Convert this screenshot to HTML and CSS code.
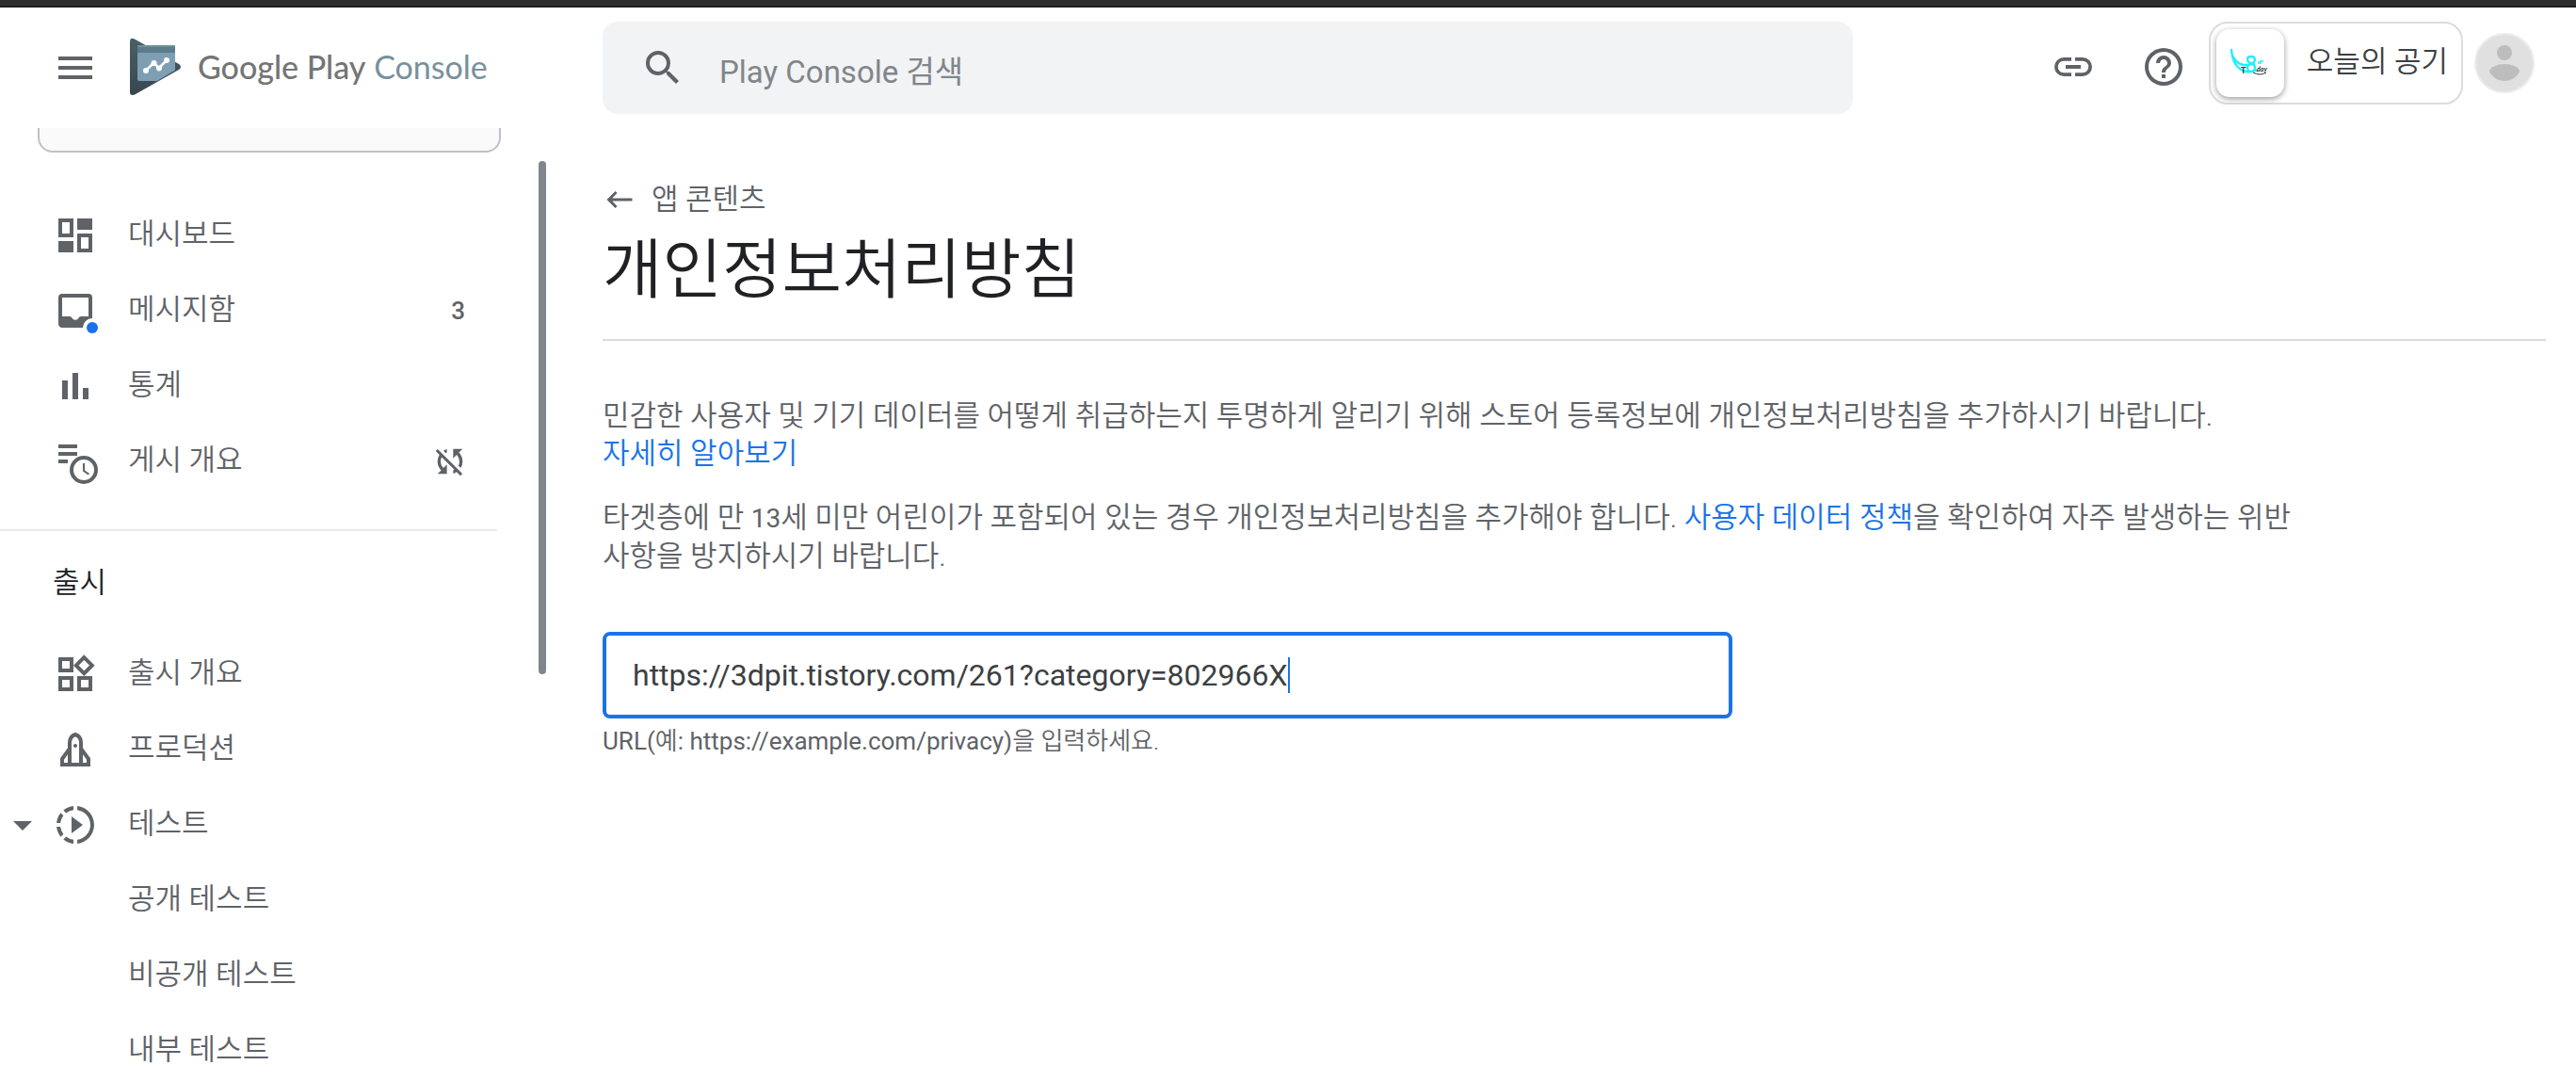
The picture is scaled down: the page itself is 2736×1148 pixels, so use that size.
FILE: index.html
```html
<!DOCTYPE html>
<html lang="ko">
<head>
<meta charset="utf-8">
<title>개인정보처리방침 | Google Play Console</title>
<meta name="viewport" content="width=device-width, initial-scale=1">
<link rel="stylesheet" href="styles.css">
</head>
<body>
<div class="window-edge"></div>

<header class="topbar">
  <div class="brand">
    <button class="icon-button" type="button" aria-label="메뉴">
      <svg class="icon" viewBox="0 0 24 24"><path d="M3 6h18v2H3zm0 5h18v2H3zm0 5h18v2H3z"/></svg>
    </button>
    <a class="logo" href="#">
      <svg class="logo-mark" viewBox="0 0 54 62" aria-hidden="true">
        <defs>
          <linearGradient id="mark" x1="0" y1="0" x2="0" y2="1">
            <stop offset="0" stop-color="#4b5f67"/>
            <stop offset="1" stop-color="#37474f"/>
          </linearGradient>
        </defs>
        <path fill="url(#mark)" d="M0 4C0 1 2 0 5 1.500L52 28q4 3 0 6L5 60.500Q0 62 0 58z"/>
        <path fill="#7e9fb1" d="M8 8h40v26.500L29 46H10q-2 0-2-2z"/>
        <path fill="#5c7b8b" d="M8 8h40v8H8z"/>
        <path fill="#6f919b" d="M8 8h40v2H8z"/>
        <path fill="none" stroke="#fff" stroke-width="2.500" d="M17 35l8-8 6 5 8-8"/>
        <g fill="#fff"><circle cx="17" cy="35" r="3"/><circle cx="25.500" cy="27" r="3"/><circle cx="31" cy="32.500" r="3"/><circle cx="39" cy="24" r="3"/></g>
      </svg>
      <span class="logo-text"><span class="logo-name">Google Play</span> Console</span>
    </a>
  </div>
  <div class="tools">
    <label class="search">
      <svg class="icon" viewBox="0 0 24 24" aria-hidden="true"><path d="M15.500 14h-.79l-.28-.27A6.470 6.470 0 0 0 16 9.500 6.500 6.500 0 1 0 9.500 16c1.610 0 3.090-.59 4.230-1.570l.27.28v.79l5 4.990L20.490 19l-4.990-5zm-6 0C7.010 14 5 11.990 5 9.500S7.010 5 9.500 5 14 7.010 14 9.500 11.990 14 9.500 14z"/></svg>
      <input class="search-input" type="search" placeholder="Play Console 검색" aria-label="Play Console 검색">
    </label>
    <div class="actions">
      <button class="icon-button" type="button" aria-label="링크">
        <svg class="icon" viewBox="0 0 24 24"><path d="M3.900 12c0-1.710 1.390-3.100 3.100-3.100h4V7H7a5 5 0 0 0 0 10h4v-1.900H7c-1.710 0-3.100-1.390-3.100-3.100zM8 13h8v-2H8v2zm9-6h-4v1.900h4a3.100 3.100 0 0 1 0 6.200h-4V17h4a5 5 0 0 0 0-10z"/></svg>
      </button>
      <button class="icon-button help" type="button" aria-label="도움말">
        <svg class="icon" viewBox="0 0 24 24"><path d="M11 18h2v-2h-2v2zm1-16a10 10 0 1 0 0 20 10 10 0 0 0 0-20zm0 18c-4.410 0-8-3.590-8-8s3.590-8 8-8 8 3.590 8 8-3.590 8-8 8zm0-14a4 4 0 0 0-4 4h2c0-1.100.9-2 2-2s2 .9 2 2c0 2-3 1.750-3 5h2c0-2.250 3-2.500 3-5a4 4 0 0 0-4-4z"/></svg>
      </button>
      <button class="app-chip" type="button">
        <span class="app-tile">
          <svg class="app-art" viewBox="0 0 72 72" aria-hidden="true">
            <g fill="none" stroke="#1ef0f8" stroke-width="2.400" stroke-linecap="round">
              <path d="M16 22q1 15 10 21 6 3 10 2"/>
              <path d="M18 30q6 9 14 8 8-1 9-5 0-4-4-4t-4 3q0 4 7 5"/>
              <circle cx="37" cy="41" r="4"/>
              <path d="M40 44h3"/>
            </g>
            <path fill="none" stroke="#1ef0f8" stroke-width="1.500" d="M45 34v3m2 0v-3h3"/>
            <text class="art-text" x="26" y="47">T</text>
            <text class="art-text art-script" x="43" y="45">day</text>
            <path fill="none" stroke="#333" d="M39 46q7 4 14 0"/>
          </svg>
        </span>
        <span class="app-name">오늘의 공기</span>
      </button>
      <button class="avatar" type="button" aria-label="계정">
        <svg class="avatar-art" viewBox="0 0 64 64"><circle cx="32" cy="32" r="31" fill="#e0e0e0" stroke="#ececec" stroke-width="2"/><circle cx="32" cy="21" r="8" fill="#bdbdbd"/><path fill="#bdbdbd" d="M16 41c0-5 9-8 16-8s16 3 16 8c-3 6-9 10-16 10s-13-4-16-10z"/></svg>
      </button>
    </div>
  </div>
</header>

<div class="page">
  <nav class="sidebar" aria-label="기본 메뉴">
    <div class="menu">
      <div class="app-card"></div>
      <ul class="nav-list">
        <li><a class="nav-item" href="#"><svg class="icon" viewBox="0 0 24 24"><path d="M19 5v2h-4V5h4M9 5v6H5V5h4m10 8v6h-4v-6h4M9 17v2H5v-2h4M21 3h-8v6h8V3zM11 3H3v10h8V3zm10 8h-8v10h8V11zm-10 4H3v6h8v-6z"/><path d="M14 4h6v4h-6zM4 16h6v4H4z"/></svg><span class="nav-label">대시보드</span></a></li>
        <li><a class="nav-item" href="#"><svg class="icon" viewBox="0 0 24 24"><path d="M19 3H5a2 2 0 0 0-2 2v14c0 1.100.9 2 2 2h14a2 2 0 0 0 2-2V5a2 2 0 0 0-2-2zm0 12h-4c-.6 0-1 .4-1.200.8a2 2 0 0 1-3.600 0C10 15.400 9.600 15 9 15H5V5h14z"/><circle cx="21" cy="21" r="5" fill="#fff"/><circle class="dot" cx="21" cy="21" r="3"/></svg><span class="nav-label">메시지함</span><span class="nav-count">3</span></a></li>
        <li><a class="nav-item" href="#"><svg class="icon" viewBox="0 0 24 24"><path d="M5 9h3v10H5zm5.500-4h3v14h-3zM16 13h3v6h-3z"/></svg><span class="nav-label">통계</span></a></li>
        <li><a class="nav-item" href="#"><svg class="icon" viewBox="0 0 24 24"><path d="M3 3h10v2H3zm0 4h10v2H3zm0 4h5v2H3z"/><circle cx="16.500" cy="16.500" r="6.500" fill="#fff" stroke="#5f6368" stroke-width="2"/><path fill="none" stroke="#5f6368" d="M16.500 13v4l2.700 1.800"/></svg><span class="nav-label">게시 개요</span><svg class="icon-medium" viewBox="0 0 24 24"><path d="M10 6.350V4.260c-.8.210-1.550.54-2.230.96l1.460 1.460c.25-.12.500-.24.770-.33zm-7.140-.94 2.360 2.360A7.925 7.925 0 0 0 4 12c0 2.210.91 4.200 2.360 5.640L4 20h6v-6l-2.240 2.240A6.003 6.003 0 0 1 6 12c0-1 .25-1.940.68-2.770l8.080 8.080c-.25.130-.5.250-.77.340v2.090c.8-.21 1.550-.54 2.230-.96l2.360 2.360 1.270-1.270L4.140 4.140 2.860 5.410zM20 4h-6v6l2.240-2.240A6.003 6.003 0 0 1 18 12c0 1-.25 1.940-.68 2.770l1.460 1.460A7.925 7.925 0 0 0 20 12c0-2.210-.91-4.200-2.360-5.640L20 4z"/></svg></a></li>
      </ul>
      <h2 class="nav-heading">출시</h2>
      <ul class="nav-list">
        <li><a class="nav-item" href="#"><svg class="icon" viewBox="0 0 24 24"><path fill="none" stroke="#5f6368" stroke-width="2" d="M4 4h6v6H4zm0 10h6v6H4zm10 0h6v6h-6zM16.660 3.100l4.250 4.250-4.250 4.250-4.250-4.250z"/></svg><span class="nav-label">출시 개요</span></a></li>
        <li><a class="nav-item" href="#"><svg class="icon" viewBox="0 0 24 24"><path fill="none" stroke="#5f6368" stroke-width="2" d="M9 20V8.500Q9 5 12 4q3 1 3 4.500V20M9 11.500L5 17v3h14v-3l-4-5.500"/><circle cx="12" cy="10" r="1"/></svg><span class="nav-label">프로덕션</span></a></li>
        <li class="nav-open"><svg class="icon caret-down" viewBox="0 0 24 24"><path d="M7 10l5 5 5-5z"/></svg><a class="nav-item" href="#"><svg class="icon" viewBox="0 0 24 24"><path d="M10 7.500v9l6-4.500zM11 4.070V2.050c-2.010.2-3.840 1-5.320 2.210L7.100 5.690A7.941 7.941 0 0 1 11 4.070zM5.690 7.100 4.260 5.680A9.949 9.949 0 0 0 2.050 11h2.020c.18-1.460.76-2.790 1.620-3.900zM4.070 13H2.050c.2 2.010 1 3.840 2.210 5.320l1.430-1.430A7.868 7.868 0 0 1 4.070 13zm1.610 6.740A9.981 9.981 0 0 0 11 21.950v-2.020a7.941 7.941 0 0 1-3.900-1.620l-1.420 1.430zM22 12c0 5.160-3.920 9.420-8.950 9.950v-2.020C16.970 19.410 20 16.050 20 12s-3.030-7.410-6.950-7.930V2.050C18.080 2.580 22 6.840 22 12z"/></svg><span class="nav-label">테스트</span></a></li>
        <li><a class="nav-item nav-sub" href="#"><span class="nav-label">공개 테스트</span></a></li>
        <li><a class="nav-item nav-sub" href="#"><span class="nav-label">비공개 테스트</span></a></li>
        <li><a class="nav-item nav-sub" href="#"><span class="nav-label">내부 테스트</span></a></li>
      </ul>
    </div>
    <div class="scroll-thumb"></div>
  </nav>

  <main class="content">
    <div class="page-head">
      <a class="back" href="#"><svg class="icon-small" viewBox="0 0 24 24"><path d="M21 11H6.830l3.580-3.590L9 6l-6 6 6 6 1.410-1.410L6.830 13H21z"/></svg>앱 콘텐츠</a>
      <h1 class="title">개인정보처리방침</h1>
    </div>
    <p class="text">민감한 사용자 및 기기 데이터를 어떻게 취급하는지 투명하게 알리기 위해 스토어 등록정보에 개인정보처리방침을 추가하시기 바랍니다. <a class="link more" href="#">자세히 알아보기</a></p>
    <p class="text">타겟층에 만 <span class="number">13</span>세 미만 어린이가 포함되어 있는 경우 개인정보처리방침을 추가해야 합니다. <a class="link" href="#">사용자 데이터 정책</a>을 확인하여 자주 발생하는 위반 사항을 방지하시기 바랍니다.</p>
    <div class="field">
      <label class="field-box">
        <input class="field-input" type="url" aria-label="개인정보처리방침 URL" aria-describedby="url-hint" value="https://3dpit.tistory.com/261?category=802966X">
        <span class="field-caret"></span>
      </label>
      <p class="field-hint" id="url-hint"><span class="latin">URL(</span>예<span class="latin">: https://example.com/privacy)</span>을 입력하세요.</p>
    </div>
  </main>
</div>
</body>
</html>
```

FILE: styles.css
```css
* { box-sizing: border-box; }

body {
  margin: 0;
  min-height: 100vh;
  display: flex;
  flex-direction: column;
  background: #fff;
  color: #5f6368;
  font-family: Roboto, "Noto Sans CJK KR", sans-serif;
  font-size: 31px;
  font-weight: 350;
  line-height: 40px;
}

a { color: inherit; text-decoration: none; }

button {
  border: 0;
  padding: 0;
  background: none;
  color: inherit;
  font: inherit;
}

input {
  border: 0;
  padding: 0;
  outline: 0;
  background: none;
  font: inherit;
}

.icon { width: 48px; height: 48px; flex: none; fill: #5f6368; }
.icon-medium { width: 40px; height: 40px; flex: none; fill: #5f6368; }
.icon-small { width: 36px; height: 36px; flex: none; fill: #5f6368; }
.dot { fill: #1a73e8; }

.window-edge {
  height: 8px;
  background: #2d2d2d;
  border-bottom: 2px solid #1f1f1f;
}

/* Top bar */
.topbar {
  display: flex;
  height: 128px;
}

.brand {
  width: 640px;
  flex: none;
  display: flex;
  align-items: center;
  gap: 34px;
  padding-left: 56px;
}

.icon-button { display: flex; }

.logo { display: flex; align-items: center; gap: 18px; padding-bottom: 2px; }
.logo-mark { width: 54px; height: 62px; }

.logo-text {
  color: #78909c;
  font-family: Lato, sans-serif;
  font-size: 34px;
  font-weight: 400;
  white-space: nowrap;
}

.logo-name { color: #757575; font-weight: 500; }

.tools {
  flex: 1;
  display: flex;
  justify-content: space-between;
  align-items: flex-start;
  padding: 15px 44px 0 0;
}

.search {
  flex: 0 1 1328px;
  display: flex;
  align-items: center;
  gap: 36px;
  height: 98px;
  padding: 0 40px;
  border-radius: 16px;
  background: #f1f3f4;
}

.search-input {
  flex: 1;
  height: 56px;
  padding-top: 8px;
  color: #3c4043;
  font-size: 33px;
  font-weight: 400;
}

.search-input::placeholder { color: #80868b; opacity: 1; }

.actions { display: flex; align-items: center; }
.actions .icon-button { padding-top: 8px; }
.help { margin: 0 24px 0 48px; }

.app-chip {
  display: flex;
  align-items: center;
  gap: 24px;
  height: 88px;
  padding: 0 14px 0 6px;
  border: 2px solid #dadce0;
  border-radius: 20px;
}

.app-tile {
  width: 72px;
  height: 72px;
  border-radius: 14px;
  background: #fff;
  box-shadow: 0 2px 6px rgba(0, 0, 0, .4);
}

.app-art { display: block; }
.art-text { fill: #333; font: 700 9px Lato, sans-serif; }
.art-script { font-style: italic; font-size: 7px; }
.app-name { padding-bottom: 2px; color: #3c4043; }

.avatar { margin-left: 12px; }
.avatar-art { display: block; width: 64px; height: 64px; }

/* Side navigation */
.page { flex: 1; display: flex; }

.sidebar {
  width: 640px;
  flex: none;
  display: flex;
  justify-content: space-between;
  align-items: flex-start;
  padding-right: 60px;
}

.menu { width: 532px; }

.app-card {
  height: 26px;
  margin: 0 0 48px 40px;
  border: 2px solid #bdc1c6;
  border-top: 0;
  border-radius: 0 0 16px 16px;
  background: #fafafa;
}

.nav-list { list-style: none; margin: 0; padding: 0; }

.nav-item {
  display: flex;
  align-items: center;
  gap: 32px;
  height: 80px;
  padding: 0 34px 0 56px;
}

.nav-sub { padding-left: 136px; }
.nav-label { flex: 1; padding-bottom: 2px; }
.nav-count { padding-right: 4px; font-size: 26px; font-weight: 500; }

.nav-heading {
  width: 528px;
  margin: 32px 0 0;
  padding: 35px 56px 37px;
  border-top: 2px solid #e8eaed;
  color: #202124;
  font-size: 31px;
  font-weight: 350;
}

.nav-open { display: flex; }
.nav-open .nav-item { flex: 1; padding-left: 8px; }
.caret-down { align-self: center; }

.scroll-thumb {
  width: 8px;
  height: 545px;
  margin-top: 35px;
  border-radius: 4px;
  background: #80868b;
}

/* Page content */
.content { flex: 1; padding: 56px 32px 0 0; }

.page-head {
  height: 170px;
  margin-bottom: 60px;
  border-bottom: 2px solid #dadce0;
}

.back { display: flex; align-items: center; gap: 16px; }

.title {
  margin: 14px 0 0;
  color: #202124;
  font-size: 69px;
  font-weight: 350;
  line-height: 84px;
}

.text {
  max-width: 1800px;
  margin: 0 0 28px;
  word-break: keep-all;
}

.link { color: #1a73e8; }
.more { display: inline-block; }
.latin { font-weight: 400; }
.number { font-size: 28px; font-weight: 400; }

.field { max-width: 1200px; margin-top: 60px; }

.field-box {
  display: flex;
  align-items: center;
  height: 92px;
  padding: 0 28px;
  border: 4px solid #1a73e8;
  border-radius: 8px;
}

.field-input {
  field-sizing: content;
  color: #3c4043;
  font-size: 32px;
  font-weight: 400;
}

.field-caret { width: 2px; height: 38px; background: #1a73e8; }

.field-hint { margin: 4px 0 0; font-size: 26px; }
```
